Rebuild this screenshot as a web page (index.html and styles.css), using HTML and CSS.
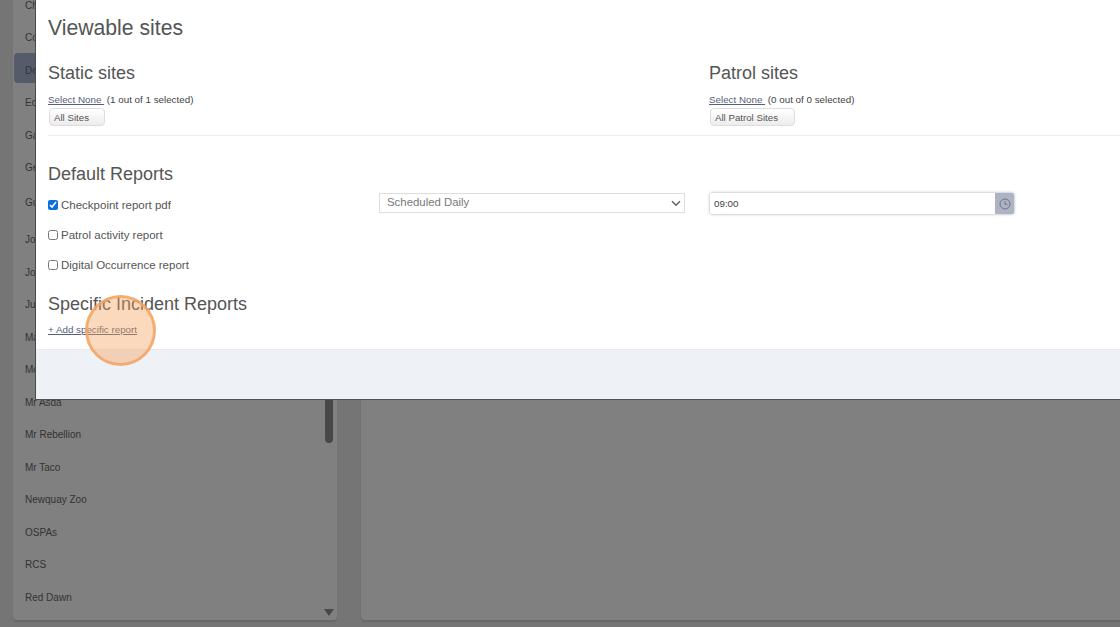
FILE: index.html
```html
<!DOCTYPE html>
<html lang="en">
<head>
<meta charset="utf-8">
<title>Viewable sites</title>
<link rel="stylesheet" href="styles.css">
</head>
<body>
<div class="page">
  <aside class="side-card">
    <ul class="site-list">
      <li class="site">Ch</li>
      <li class="site">Co</li>
      <li class="site site-active">De</li>
      <li class="site">Ed</li>
      <li class="site">Ga</li>
      <li class="site">Ge</li>
      <li class="site site-tall">Gu</li>
      <li class="site">Jo</li>
      <li class="site">Jo</li>
      <li class="site">Ju</li>
      <li class="site">Ma</li>
      <li class="site">Mo</li>
      <li class="site">Mr Asda</li>
      <li class="site">Mr Rebellion</li>
      <li class="site">Mr Taco</li>
      <li class="site">Newquay Zoo</li>
      <li class="site">OSPAs</li>
      <li class="site">RCS</li>
      <li class="site">Red Dawn</li>
    </ul>
    <div class="scroll-thumb"></div>
    <div class="scroll-arrow"></div>
  </aside>
  <main class="main-card"></main>
</div>

<section class="modal">
  <div class="modal-body">
    <h1 class="title">Viewable sites</h1>
    <div class="sites-grid">
      <div class="sites-col">
        <h2 class="heading">Static sites</h2>
        <p class="select-line"><a class="link" href="#">Select None&nbsp;</a> (1 out of 1 selected)</p>
        <button class="pill pill-static" type="button">All Sites</button>
      </div>
      <div class="sites-col">
        <h2 class="heading">Patrol sites</h2>
        <p class="select-line"><a class="link" href="#">Select None&nbsp;</a> (0 out of 0 selected)</p>
        <button class="pill pill-patrol" type="button">All Patrol Sites</button>
      </div>
    </div>
    <hr class="rule">
    <h2 class="heading heading-reports">Default Reports</h2>
    <div class="reports-grid">
      <div class="checks">
        <label class="check"><input type="checkbox" class="box" checked>Checkpoint report pdf</label>
        <label class="check"><input type="checkbox" class="box">Patrol activity report</label>
        <label class="check"><input type="checkbox" class="box">Digital Occurrence report</label>
      </div>
      <div class="dropdown">
        <span class="dropdown-value">Scheduled Daily</span>
        <svg class="chevron" width="10" height="7" viewBox="0 0 10 7"><path d="M1 1.2l4 4 4-4" fill="none" stroke="#666" stroke-width="1.6"/></svg>
      </div>
      <div class="time-field">
        <span class="time-value">09:00</span>
        <span class="time-addon">
          <svg width="12" height="12" viewBox="0 0 12 12"><circle cx="6" cy="6" r="5" fill="none" stroke="#6f7688" stroke-width="1"/><path d="M6 3v3.3h2.4" fill="none" stroke="#6f7688" stroke-width="1"/></svg>
        </span>
      </div>
    </div>
    <h2 class="heading heading-specific">Specific Incident Reports</h2>
    <a class="link link-add" href="#">+ Add specific report</a>
  </div>
  <footer class="modal-footer"></footer>
</section>
<div class="highlight"></div>
</body>
</html>
```

FILE: styles.css
```css
* { box-sizing: border-box; }
html, body { margin: 0; height: 100%; overflow: hidden; }
body {
  background: #757575;
  font-family: "Liberation Sans", Arial, sans-serif;
  color: #555;
}
.page {
  display: flex;
  gap: 24px;
  height: 627px;
  padding: 0 0 7px 13px;
}
.side-card {
  position: relative;
  width: 324px;
  background: #808080;
  border-radius: 0 0 4px 4px;
  box-shadow: 0 2px 1px #696969;
  overflow: hidden;
}
.main-card {
  flex: 1;
  background: #808080;
  border-radius: 0 0 0 4px;
  box-shadow: 0 2px 1px #696969;
}
.site-list {
  list-style: none;
  margin: -11px 0 0;
  padding: 0;
}
.site {
  height: 32.5px;
  margin-left: 1px;
  padding-left: 11px;
  display: flex;
  align-items: center;
  font-size: 10px;
  color: #333;
}
.site-tall { height: 37.5px; margin-bottom: 2px; }
.site-active {
  background: #565b6c;
  border-radius: 4px;
  height: 30px;
  margin-top: -1px;
  margin-bottom: 3.5px;
  padding-top: 4px;
}
.scroll-thumb {
  position: absolute;
  left: 312px;
  top: 0;
  width: 8px;
  height: 443px;
  background: #484848;
  border-radius: 0 0 4px 4px;
}
.scroll-arrow {
  position: absolute;
  left: 311px;
  top: 609px;
  border-left: 5px solid transparent;
  border-right: 5px solid transparent;
  border-top: 7px solid #484848;
}
.modal {
  position: absolute;
  left: 35px;
  top: 0;
  right: 0;
  height: 400px;
  background: #fff;
  border-left: 1px solid #4a4a4a;
  border-bottom: 1px solid #4f4f4f;
  display: flex;
  flex-direction: column;
}
.modal-body {
  flex: 1;
  padding: 15px 0 0 12px;
}
.modal-footer {
  height: 50px;
  background: #eef1f6;
  border-top: 1px solid #e8eaee;
}
.title {
  margin: 0;
  font-size: 21.2px;
  font-weight: 400;
  line-height: 26px;
  color: #555;
}
.heading {
  margin: 0;
  font-size: 18px;
  font-weight: 400;
  line-height: 24px;
  color: #555;
}
.sites-grid {
  display: grid;
  grid-template-columns: 661px 1fr;
  margin-top: 20px;
}
.select-line {
  margin: 9px 0 0;
  font-size: 9.8px;
  line-height: 12px;
  color: #444;
}
.link { color: #55607a; text-decoration: underline; }
.pill {
  display: block;
  margin: 2px 0 0 1px;
  height: 18px;
  padding: 0 4px;
  border: 1px solid #ddd;
  border-radius: 4px;
  background: linear-gradient(#fff, #ececec);
  font: 9.7px "Liberation Sans", Arial, sans-serif;
  color: #555;
  text-align: left;
}
.pill-static { width: 56px; }
.pill-patrol { width: 85px; }
.rule {
  margin: 9px 0 0;
  border: 0;
  border-top: 1px solid #eee;
}
.heading-reports { margin-top: 26px; }
.reports-grid {
  display: grid;
  grid-template-columns: 331px 330px 305px;
  align-items: start;
  margin-top: 7px;
}
.checks { display: flex; flex-direction: column; gap: 12px; margin-top: 3px; }
.check {
  display: flex;
  align-items: center;
  height: 18px;
  font-size: 11.5px;
  color: #555;
}
.box {
  width: 10px;
  height: 10px;
  margin: 0 3px 0 0;
  accent-color: #0b6fe0;
}
.dropdown {
  display: flex;
  align-items: center;
  justify-content: space-between;
  width: 306px;
  height: 20px;
  padding: 0 2px 0 7px;
  border: 1px solid #ddd;
  font-size: 11.4px;
  color: #777;
}
.dropdown-value { margin-bottom: 2px; }
.chevron { margin-right: 1px; }
.time-field {
  display: flex;
  align-items: stretch;
  height: 21px;
  margin-left: 1px;
  width: 304px;
  border-radius: 2px;
  box-shadow: 0 0 3px rgba(70, 80, 110, .55);
  overflow: hidden;
}
.time-value {
  flex: 1;
  padding-left: 4px;
  font-size: 9.8px;
  line-height: 21px;
  color: #444;
}
.time-addon {
  width: 19px;
  background: #aeb3c4;
  display: flex;
  align-items: center;
  justify-content: center;
}
.heading-specific { margin-top: 18px; }
.link-add { display: block; margin-top: 8px; font-size: 9.8px; line-height: 12px; }
.highlight {
  position: absolute;
  left: 85px;
  top: 295px;
  width: 71px;
  height: 71px;
  border-radius: 50%;
  background: rgba(244, 160, 90, .4);
  border: 3px solid rgba(244, 165, 100, .85);
}
```
